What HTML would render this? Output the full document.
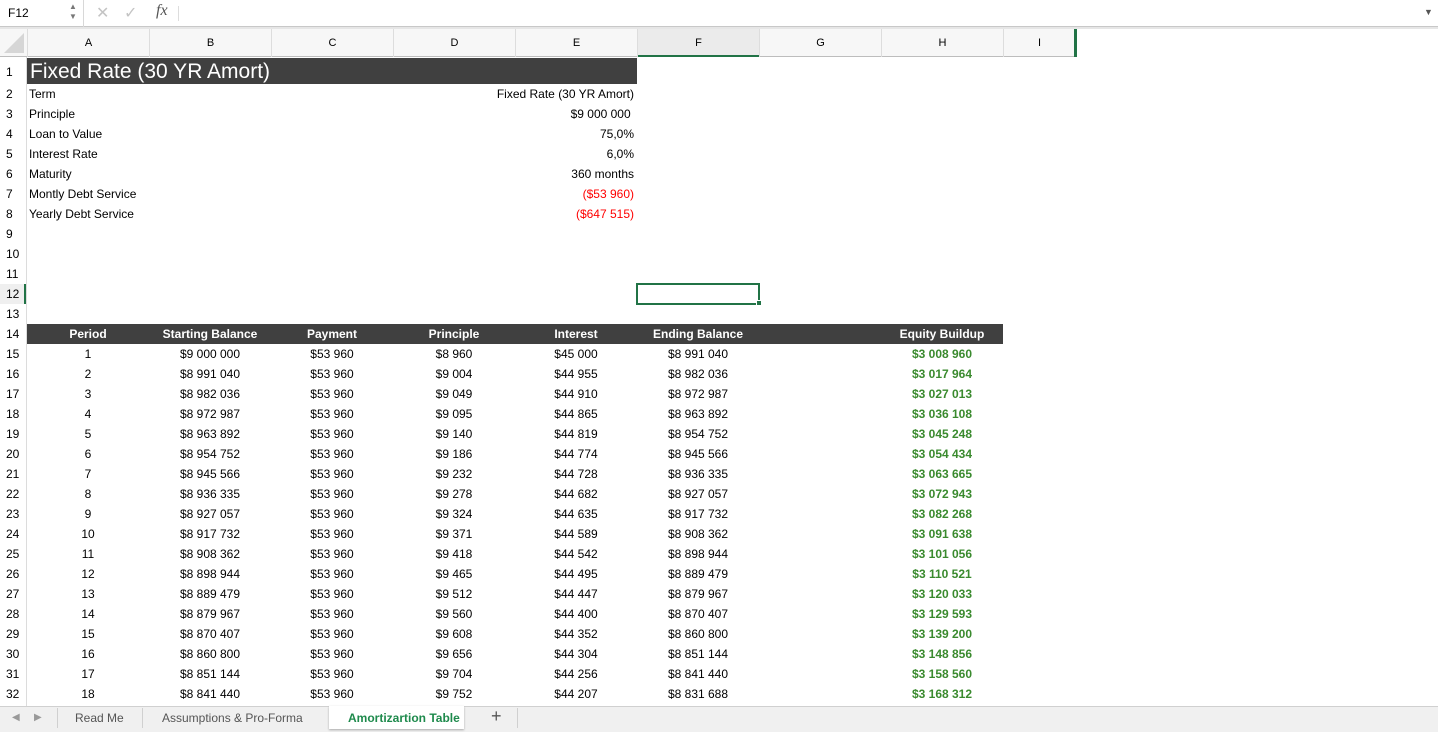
<!DOCTYPE html>
<html><head><meta charset="utf-8"><style>
*{margin:0;padding:0;box-sizing:border-box}
body{width:1438px;height:732px;overflow:hidden;background:#fff;font-family:"Liberation Sans",sans-serif;font-size:12px;color:#000;position:relative}
.a{position:absolute;white-space:nowrap}
.rh{position:absolute;left:0;width:27px;height:20px;line-height:20px;padding-left:6px;font-size:12px}
.row{position:absolute;left:27px;height:20px;line-height:20px;display:flex;font-size:12px}
.row div{width:122px;text-align:center}
.g{color:#3a8a2e;font-weight:bold}
</style></head><body>
<!-- formula bar -->
<div class="a" style="left:0;top:0;width:1438px;height:27px;background:#fff;border-bottom:1px solid #c8c8c8"></div>
<div class="a" style="left:8px;top:6px;font-size:12px">F12</div>
<div class="a" style="left:69px;top:2px;font-size:8px;color:#777;line-height:10px">▲<br>▼</div>
<div class="a" style="left:83px;top:0;width:1px;height:27px;background:#d8d8d8"></div>
<div class="a" style="left:96px;top:3px;font-size:16px;color:#c4c4c4">✕</div>
<div class="a" style="left:124px;top:3px;font-size:16px;color:#c4c4c4">✓</div>
<div class="a" style="left:156px;top:2px;font-size:16px;font-style:italic;font-family:'Liberation Serif',serif;color:#555">fx</div>
<div class="a" style="left:178px;top:6px;width:1px;height:15px;background:#ddd"></div>
<div class="a" style="left:1424px;top:7px;font-size:9px;color:#555">▼</div>
<div class="a" style="left:0;top:27px;width:1438px;height:2px;background:#e6e6e6"></div>
<!-- column headers -->
<div class="a" style="left:0;top:29px;width:1076px;height:28px;background:#f7f7f7;border-bottom:1px solid #bdbdbd"></div>
<div class="a" style="left:4px;top:33px;width:0;height:0;border-left:20px solid transparent;border-bottom:20px solid #d6d6d6"></div>
<div class="a" style="left:637px;top:29px;width:122px;height:28px;background:#ebebeb;border-bottom:2px solid #217346"></div>
<div class="a" style="left:1074px;top:29px;width:3px;height:28px;background:#217346"></div>
<div class="a" style="left:27px;top:29px;height:28px;line-height:28px;display:flex;font-size:11px">
<div style="width:122px;text-align:center;border-left:1px solid #ddd">A</div><div style="width:122px;text-align:center;border-left:1px solid #ddd">B</div><div style="width:122px;text-align:center;border-left:1px solid #ddd">C</div><div style="width:122px;text-align:center;border-left:1px solid #ddd">D</div><div style="width:122px;text-align:center;border-left:1px solid #ddd">E</div><div style="width:122px;text-align:center;border-left:1px solid #ddd">F</div><div style="width:122px;text-align:center;border-left:1px solid #ddd">G</div><div style="width:122px;text-align:center;border-left:1px solid #ddd">H</div><div style="width:72px;text-align:center;border-left:1px solid #ddd">I</div></div>
<!-- row header separator -->
<div class="a" style="left:26px;top:57px;width:1px;height:649px;background:#dcdcdc"></div>
<div class="a" style="left:0;top:284px;width:26px;height:20px;background:#efefef"></div>
<div class="a" style="left:24px;top:284px;width:2px;height:20px;background:#217346"></div>
<!-- row 1 -->
<div class="a" style="left:27px;top:58px;width:610px;height:26px;background:#404040"></div>
<div class="a" style="left:30px;top:59px;font-size:21px;color:#fff;line-height:26px">Fixed Rate (30 YR Amort)</div>
<div class="rh" style="top:62px">1</div>
<div class="rh" style="top:84px">2</div><div class="rh" style="top:104px">3</div><div class="rh" style="top:124px">4</div><div class="rh" style="top:144px">5</div><div class="rh" style="top:164px">6</div><div class="rh" style="top:184px">7</div><div class="rh" style="top:204px">8</div><div class="rh" style="top:224px">9</div><div class="rh" style="top:244px">10</div><div class="rh" style="top:264px">11</div><div class="rh" style="top:284px">12</div><div class="rh" style="top:304px">13</div><div class="rh" style="top:324px">14</div><div class="rh" style="top:344px">15</div><div class="rh" style="top:364px">16</div><div class="rh" style="top:384px">17</div><div class="rh" style="top:404px">18</div><div class="rh" style="top:424px">19</div><div class="rh" style="top:444px">20</div><div class="rh" style="top:464px">21</div><div class="rh" style="top:484px">22</div><div class="rh" style="top:504px">23</div><div class="rh" style="top:524px">24</div><div class="rh" style="top:544px">25</div><div class="rh" style="top:564px">26</div><div class="rh" style="top:584px">27</div><div class="rh" style="top:604px">28</div><div class="rh" style="top:624px">29</div><div class="rh" style="top:644px">30</div><div class="rh" style="top:664px">31</div><div class="rh" style="top:684px">32</div>
<!-- rows 2-8 -->
<div class="a" style="left:29px;top:84px;line-height:20px">Term<br>Principle<br>Loan to Value<br>Interest Rate<br>Maturity<br>Montly Debt Service<br>Yearly Debt Service</div>
<div class="a" style="right:804px;top:84px;line-height:20px;text-align:right">Fixed Rate (30 YR Amort)<br>$9 000 000&nbsp;<br>75,0%<br>6,0%<br>360 months<br><span style="color:#f00">($53 960)</span><br><span style="color:#f00">($647 515)</span></div>
<!-- selection -->
<div class="a" style="left:636px;top:283px;width:124px;height:22px;border:2px solid #217346"></div>
<div class="a" style="left:756px;top:300px;width:6px;height:6px;background:#217346;border:1px solid #fff"></div>
<!-- table header -->
<div class="a" style="left:27px;top:324px;width:976px;height:20px;background:#404040"></div>
<div class="row" style="top:324px;color:#fff;font-weight:bold"><div>Period</div><div>Starting Balance</div><div>Payment</div><div>Principle</div><div>Interest</div><div>Ending Balance</div><div></div><div>Equity Buildup</div></div>
<div class="row" style="top:344px"><div>1</div><div>$9 000 000</div><div>$53 960</div><div>$8 960</div><div>$45 000</div><div>$8 991 040</div><div></div><div class="g">$3 008 960</div></div>
<div class="row" style="top:364px"><div>2</div><div>$8 991 040</div><div>$53 960</div><div>$9 004</div><div>$44 955</div><div>$8 982 036</div><div></div><div class="g">$3 017 964</div></div>
<div class="row" style="top:384px"><div>3</div><div>$8 982 036</div><div>$53 960</div><div>$9 049</div><div>$44 910</div><div>$8 972 987</div><div></div><div class="g">$3 027 013</div></div>
<div class="row" style="top:404px"><div>4</div><div>$8 972 987</div><div>$53 960</div><div>$9 095</div><div>$44 865</div><div>$8 963 892</div><div></div><div class="g">$3 036 108</div></div>
<div class="row" style="top:424px"><div>5</div><div>$8 963 892</div><div>$53 960</div><div>$9 140</div><div>$44 819</div><div>$8 954 752</div><div></div><div class="g">$3 045 248</div></div>
<div class="row" style="top:444px"><div>6</div><div>$8 954 752</div><div>$53 960</div><div>$9 186</div><div>$44 774</div><div>$8 945 566</div><div></div><div class="g">$3 054 434</div></div>
<div class="row" style="top:464px"><div>7</div><div>$8 945 566</div><div>$53 960</div><div>$9 232</div><div>$44 728</div><div>$8 936 335</div><div></div><div class="g">$3 063 665</div></div>
<div class="row" style="top:484px"><div>8</div><div>$8 936 335</div><div>$53 960</div><div>$9 278</div><div>$44 682</div><div>$8 927 057</div><div></div><div class="g">$3 072 943</div></div>
<div class="row" style="top:504px"><div>9</div><div>$8 927 057</div><div>$53 960</div><div>$9 324</div><div>$44 635</div><div>$8 917 732</div><div></div><div class="g">$3 082 268</div></div>
<div class="row" style="top:524px"><div>10</div><div>$8 917 732</div><div>$53 960</div><div>$9 371</div><div>$44 589</div><div>$8 908 362</div><div></div><div class="g">$3 091 638</div></div>
<div class="row" style="top:544px"><div>11</div><div>$8 908 362</div><div>$53 960</div><div>$9 418</div><div>$44 542</div><div>$8 898 944</div><div></div><div class="g">$3 101 056</div></div>
<div class="row" style="top:564px"><div>12</div><div>$8 898 944</div><div>$53 960</div><div>$9 465</div><div>$44 495</div><div>$8 889 479</div><div></div><div class="g">$3 110 521</div></div>
<div class="row" style="top:584px"><div>13</div><div>$8 889 479</div><div>$53 960</div><div>$9 512</div><div>$44 447</div><div>$8 879 967</div><div></div><div class="g">$3 120 033</div></div>
<div class="row" style="top:604px"><div>14</div><div>$8 879 967</div><div>$53 960</div><div>$9 560</div><div>$44 400</div><div>$8 870 407</div><div></div><div class="g">$3 129 593</div></div>
<div class="row" style="top:624px"><div>15</div><div>$8 870 407</div><div>$53 960</div><div>$9 608</div><div>$44 352</div><div>$8 860 800</div><div></div><div class="g">$3 139 200</div></div>
<div class="row" style="top:644px"><div>16</div><div>$8 860 800</div><div>$53 960</div><div>$9 656</div><div>$44 304</div><div>$8 851 144</div><div></div><div class="g">$3 148 856</div></div>
<div class="row" style="top:664px"><div>17</div><div>$8 851 144</div><div>$53 960</div><div>$9 704</div><div>$44 256</div><div>$8 841 440</div><div></div><div class="g">$3 158 560</div></div>
<div class="row" style="top:684px"><div>18</div><div>$8 841 440</div><div>$53 960</div><div>$9 752</div><div>$44 207</div><div>$8 831 688</div><div></div><div class="g">$3 168 312</div></div>
<!-- tab bar -->
<div class="a" style="left:0;top:706px;width:1438px;height:26px;background:#f0f0f0;border-top:1px solid #d0d0d0"></div>
<div class="a" style="left:12px;top:712px;font-size:10px;color:#999">◀</div>
<div class="a" style="left:34px;top:712px;font-size:10px;color:#999">▶</div>
<div class="a" style="left:57px;top:708px;width:1px;height:20px;background:#d0d0d0"></div>
<div class="a" style="left:75px;top:711px;font-size:12px;color:#555">Read Me</div>
<div class="a" style="left:142px;top:708px;width:1px;height:20px;background:#d0d0d0"></div>
<div class="a" style="left:162px;top:711px;font-size:12px;color:#555">Assumptions &amp; Pro-Forma</div>
<div class="a" style="left:329px;top:706px;width:135px;height:23px;background:#fff;box-shadow:0 1px 2px #aaa"></div>
<div class="a" style="left:348px;top:711px;font-size:12px;color:#1e8a4c;font-weight:bold">Amortizartion Table</div>
<div class="a" style="left:491px;top:706px;font-size:18px;color:#555">+</div>
<div class="a" style="left:517px;top:708px;width:1px;height:20px;background:#d0d0d0"></div>
</body></html>
